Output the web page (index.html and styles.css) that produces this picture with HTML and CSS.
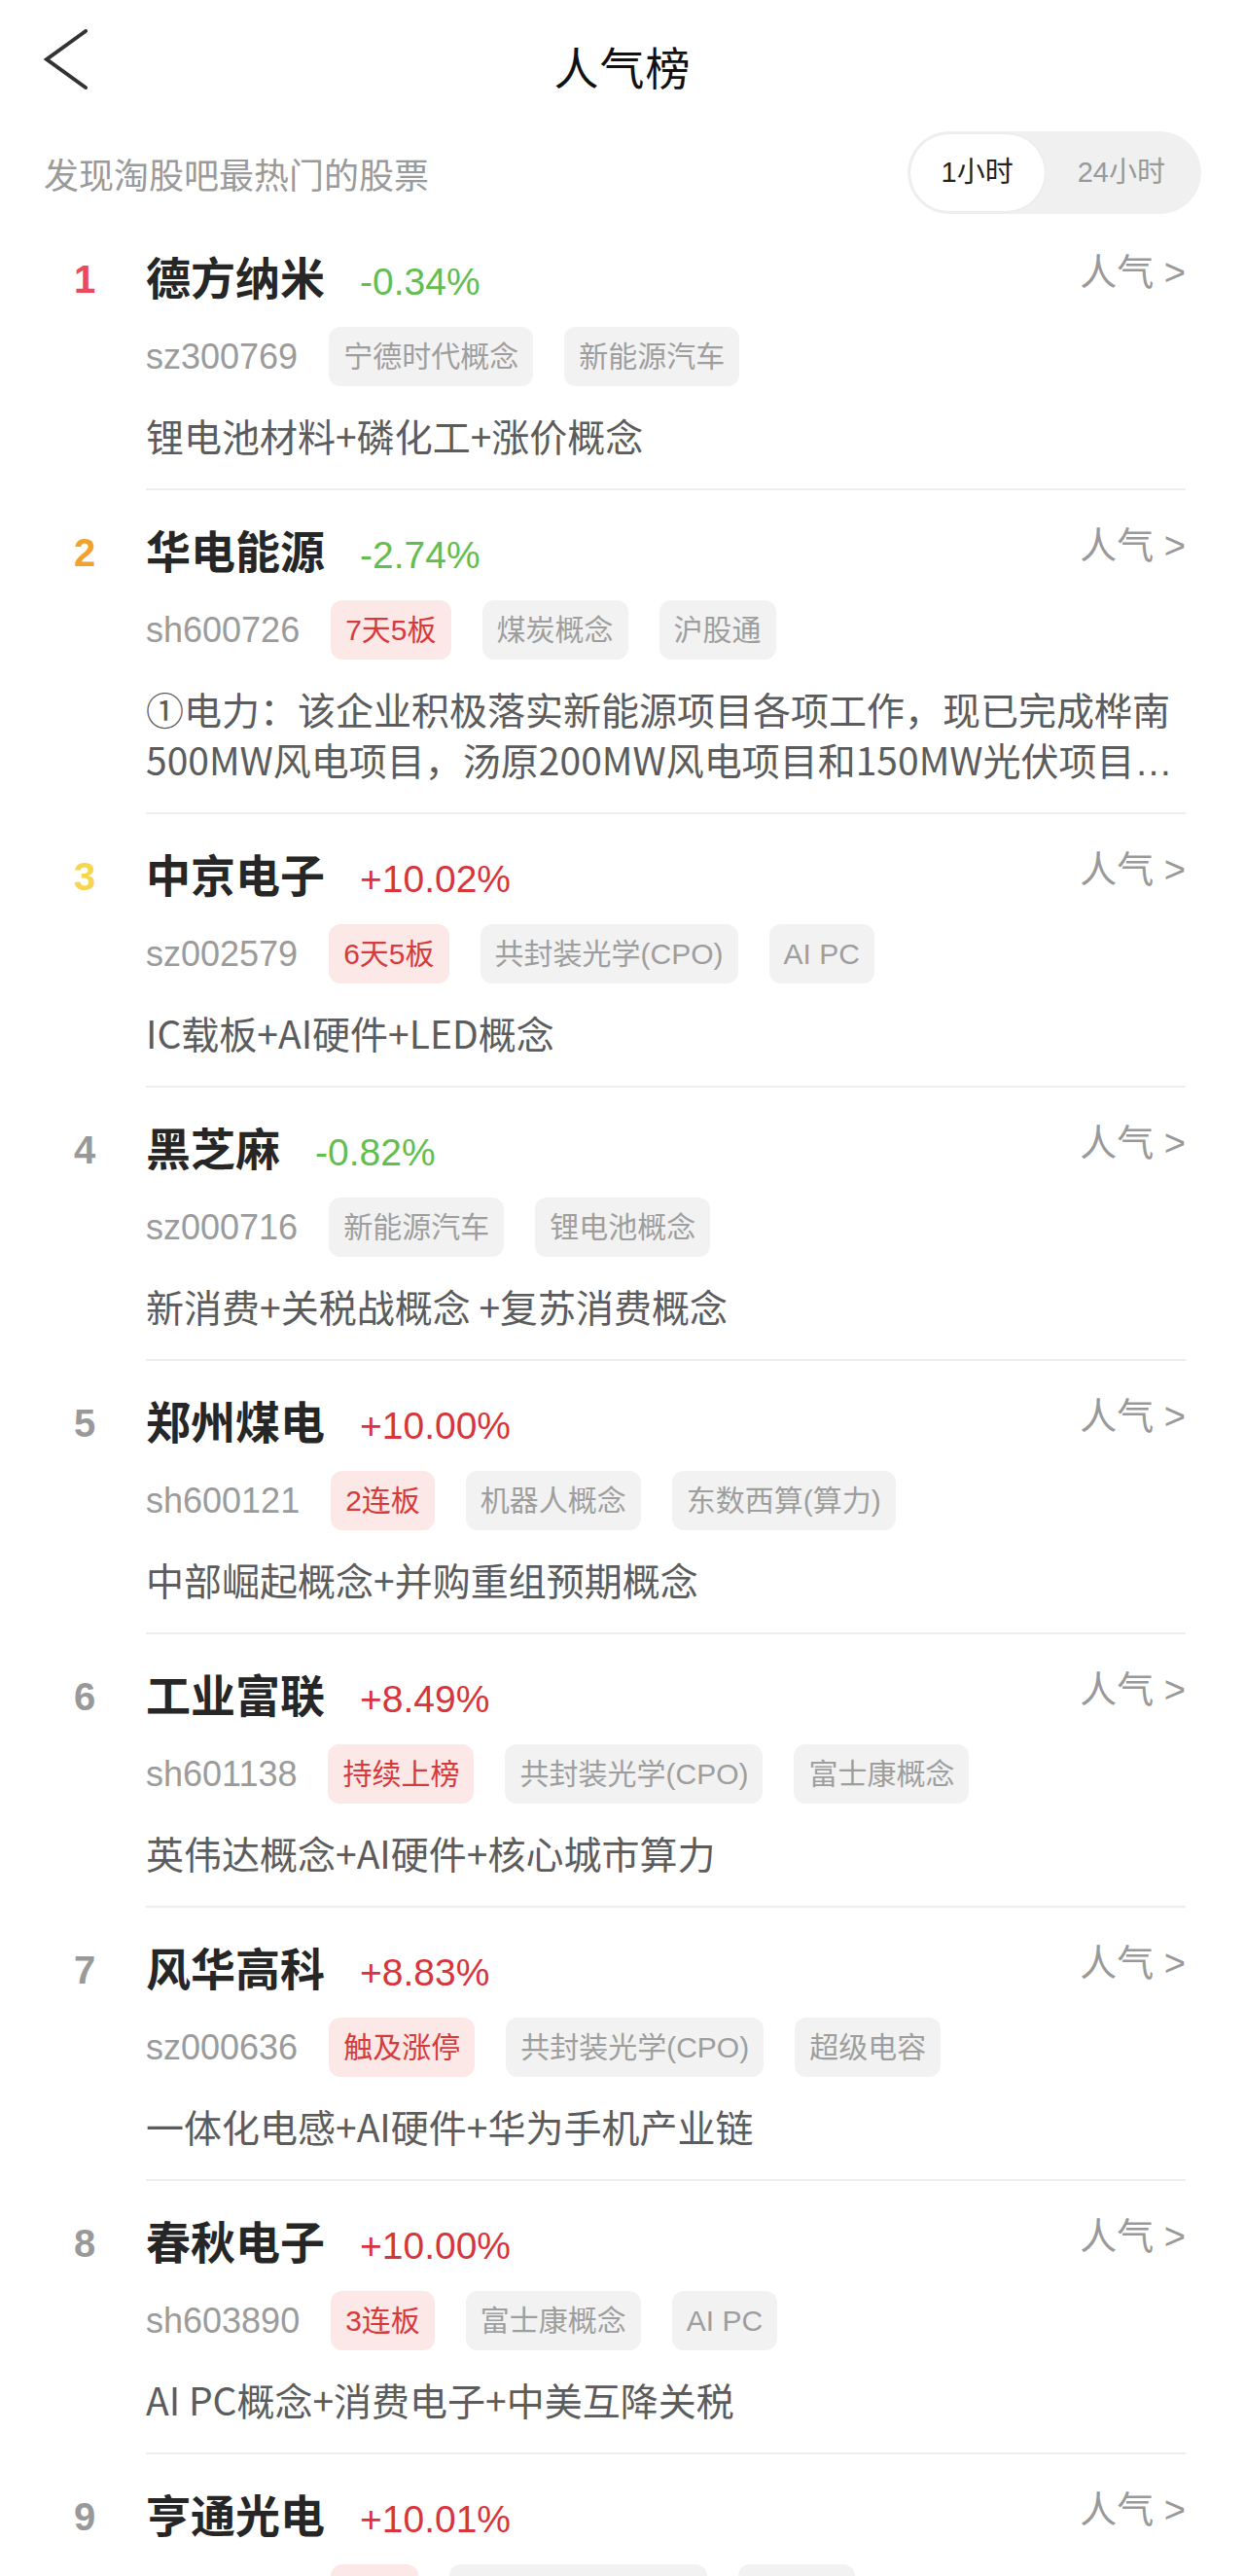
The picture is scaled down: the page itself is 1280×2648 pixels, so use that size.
FILE: index.html
```html
<!DOCTYPE html>
<html lang="zh-CN">
  <head>
    <meta charset="utf-8" />
    <meta name="viewport" content="width=device-width, initial-scale=1.0" />
    <title>人气榜</title>
    <link rel="stylesheet" href="styles.css">
  </head>
  <body>
    <header class="topbar">
      <a class="back" href="#">
        <svg width="48" height="64" viewBox="0 0 48 64">
          <path d="M44 2 L4 31 L44 60" fill="none" stroke="#333" stroke-width="4" stroke-linecap="round" />
        </svg>
      </a>
      <h1 class="page-title">人气榜</h1>
      <span></span>
    </header>

    <div class="subbar">
      <span class="subtitle">发现淘股吧最热门的股票</span>
      <div class="switch">
        <span class="on">1小时</span>
        <span>24小时</span>
      </div>
    </div>

    <!-- hot list -->
    <ol class="list">
      <li class="item">
        <span class="rank r1">1</span>
        <div class="body">
          <div class="top">
            <div class="title"><span class="name">德方纳米</span><span class="pct down">-0.34%</span></div>
            <span class="hot">人气 &gt;</span>
          </div>
          <div class="meta">
            <span class="code">sz300769</span>
            <span class="tag">宁德时代概念</span>
            <span class="tag">新能源汽车</span>
          </div>
          <p class="desc">锂电池材料+磷化工+涨价概念</p>
        </div>
      </li>
      <li class="item">
        <span class="rank r2">2</span>
        <div class="body">
          <div class="top">
            <div class="title"><span class="name">华电能源</span><span class="pct down">-2.74%</span></div>
            <span class="hot">人气 &gt;</span>
          </div>
          <div class="meta">
            <span class="code">sh600726</span>
            <span class="tag hl">7天5板</span>
            <span class="tag">煤炭概念</span>
            <span class="tag">沪股通</span>
          </div>
          <p class="desc">①电力：该企业积极落实新能源项目各项工作，现已完成桦南<br>500MW风电项目，汤原200MW风电项目和150MW光伏项目<span class="dots">…</span></p>
        </div>
      </li>
      <li class="item">
        <span class="rank r3">3</span>
        <div class="body">
          <div class="top">
            <div class="title"><span class="name">中京电子</span><span class="pct up">+10.02%</span></div>
            <span class="hot">人气 &gt;</span>
          </div>
          <div class="meta">
            <span class="code">sz002579</span>
            <span class="tag hl">6天5板</span>
            <span class="tag">共封装光学(CPO)</span>
            <span class="tag">AI PC</span>
          </div>
          <p class="desc">IC载板+AI硬件+LED概念</p>
        </div>
      </li>
      <li class="item">
        <span class="rank">4</span>
        <div class="body">
          <div class="top">
            <div class="title"><span class="name">黑芝麻</span><span class="pct down">-0.82%</span></div>
            <span class="hot">人气 &gt;</span>
          </div>
          <div class="meta">
            <span class="code">sz000716</span>
            <span class="tag">新能源汽车</span>
            <span class="tag">锂电池概念</span>
          </div>
          <p class="desc">新消费+关税战概念 +复苏消费概念</p>
        </div>
      </li>
      <li class="item">
        <span class="rank">5</span>
        <div class="body">
          <div class="top">
            <div class="title"><span class="name">郑州煤电</span><span class="pct up">+10.00%</span></div>
            <span class="hot">人气 &gt;</span>
          </div>
          <div class="meta">
            <span class="code">sh600121</span>
            <span class="tag hl">2连板</span>
            <span class="tag">机器人概念</span>
            <span class="tag">东数西算(算力)</span>
          </div>
          <p class="desc">中部崛起概念+并购重组预期概念</p>
        </div>
      </li>
      <li class="item">
        <span class="rank">6</span>
        <div class="body">
          <div class="top">
            <div class="title"><span class="name">工业富联</span><span class="pct up">+8.49%</span></div>
            <span class="hot">人气 &gt;</span>
          </div>
          <div class="meta">
            <span class="code">sh601138</span>
            <span class="tag hl">持续上榜</span>
            <span class="tag">共封装光学(CPO)</span>
            <span class="tag">富士康概念</span>
          </div>
          <p class="desc">英伟达概念+AI硬件+核心城市算力</p>
        </div>
      </li>
      <li class="item">
        <span class="rank">7</span>
        <div class="body">
          <div class="top">
            <div class="title"><span class="name">风华高科</span><span class="pct up">+8.83%</span></div>
            <span class="hot">人气 &gt;</span>
          </div>
          <div class="meta">
            <span class="code">sz000636</span>
            <span class="tag hl">触及涨停</span>
            <span class="tag">共封装光学(CPO)</span>
            <span class="tag">超级电容</span>
          </div>
          <p class="desc">一体化电感+AI硬件+华为手机产业链</p>
        </div>
      </li>
      <li class="item">
        <span class="rank">8</span>
        <div class="body">
          <div class="top">
            <div class="title"><span class="name">春秋电子</span><span class="pct up">+10.00%</span></div>
            <span class="hot">人气 &gt;</span>
          </div>
          <div class="meta">
            <span class="code">sh603890</span>
            <span class="tag hl">3连板</span>
            <span class="tag">富士康概念</span>
            <span class="tag">AI PC</span>
          </div>
          <p class="desc">AI PC概念+消费电子+中美互降关税</p>
        </div>
      </li>
      <li class="item">
        <span class="rank">9</span>
        <div class="body">
          <div class="top">
            <div class="title"><span class="name">亨通光电</span><span class="pct up">+10.01%</span></div>
            <span class="hot">人气 &gt;</span>
          </div>
          <div class="meta">
            <span class="code">sh600487</span>
            <span class="tag hl">首板</span>
            <span class="tag">共封装光学(CPO)</span>
            <span class="tag">光通信</span>
          </div>
          <p class="desc">海底光缆+光纤概念+共封装光学</p>
        </div>
      </li>
    </ol>
  </body>
</html>
```

FILE: styles.css
```css
body {
  margin: 0;
  background: #fff;
  font-family: "Liberation Sans", "Noto Sans CJK SC", sans-serif;
  overflow: hidden;
}

.topbar {
  display: grid;
  grid-template-columns: 1fr auto 1fr;
  height: 135px;
  padding: 0 44px;
  box-sizing: border-box;
}

.back {
  align-self: start;
  margin-top: 30px;
  width: 48px;
  height: 64px;
}

.back svg {
  display: block;
}

.page-title {
  margin: 36px 0 0;
  font-family: "Noto Sans CJK SC", sans-serif;
  font-size: 46px;
  font-weight: normal;
  line-height: 62px;
  color: #111;
  letter-spacing: 1px;
}

.subbar {
  display: flex;
  justify-content: space-between;
  align-items: center;
  height: 85px;
  padding: 0 45px;
}

.subtitle {
  font-size: 36px;
  color: #9a9a9a;
}

.switch {
  display: flex;
  height: 85px;
  padding: 3px;
  box-sizing: border-box;
  background: #f0f0f0;
  border-radius: 43px;
}

.switch span {
  padding: 0 34px;
  font-size: 29px;
  line-height: 79px;
  color: #999;
  border-radius: 40px;
}

.switch .on {
  padding: 0 32px;
  background: #fff;
  color: #222;
  box-shadow: 0 0 3px rgba(0, 0, 0, 0.06);
}

.list {
  list-style: none;
  margin: 3px 0 0;
  padding: 0 61px 0 57px;
}

.item {
  display: flex;
}

.rank {
  flex: none;
  width: 60px;
  padding-top: 34px;
  text-align: center;
  font-size: 40px;
  font-weight: bold;
  line-height: 60px;
  color: #999;
}

.rank.r1 {
  color: #ec4a5c;
}

.rank.r2 {
  color: #f2a12c;
}

.rank.r3 {
  color: #f7d54e;
}

.body {
  flex: 1;
  min-width: 0;
  margin-left: 33px;
  padding: 34px 0 29px;
  border-bottom: 2px solid #eee;
}

.top {
  display: flex;
  align-items: flex-start;
  height: 60px;
}

.title {
  display: flex;
  align-items: baseline;
  gap: 36px;
  height: 60px;
  line-height: 60px;
}

.name {
  font-size: 46px;
  font-weight: bold;
  color: #262626;
}

.pct {
  font-size: 39px;
}

.pct.down {
  color: #62be50;
}

.pct.up {
  color: #d8343c;
}

.hot {
  margin-left: auto;
  font-size: 38px;
  line-height: 46px;
  color: #999;
}

.meta {
  display: flex;
  align-items: center;
  gap: 32px;
  height: 61px;
  margin-top: 19px;
}

.code {
  font-size: 36px;
  color: #9b9b9b;
}

.tag {
  padding: 0 15px;
  font-size: 30px;
  line-height: 61px;
  color: #9e9e9e;
  background: #f2f2f2;
  border-radius: 12px;
}

.tag.hl {
  color: #d63a3a;
  background: #fde8e8;
}

.desc {
  margin: 24px 0 0;
  font-family: "Noto Sans CJK SC", sans-serif;
  font-size: 39px;
  line-height: 52px;
  color: #5c5c5c;
  white-space: nowrap;
}

.dots {
  font-family: "Liberation Sans", sans-serif;
  line-height: 1;
}
```
